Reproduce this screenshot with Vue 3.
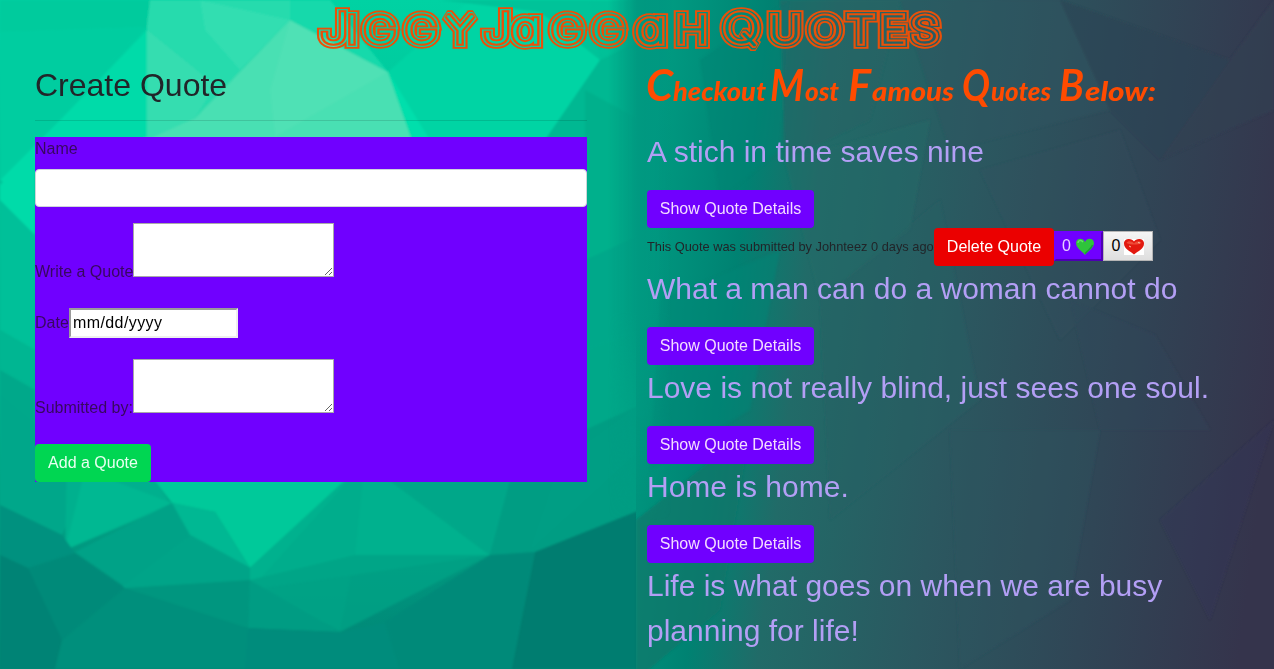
<script setup>
import { ref } from 'vue'

const facets = [
  ['0,0 150,0 147,27 0,32', '#00cb9d'],
  ['0,32 147,27 60,120 0,180', '#00cda0'],
  ['0,180 60,120 147,30 147,137 35,170 35,200', '#00dba9'],
  ['147,25 150,0 290,0 290,20 195,118 147,132', '#26dbad'],
  ['200,0 290,20 240,70 205,30', '#32deb1'],
  ['290,20 388,72 412,140 140,140 195,118', '#4ae0b3'],
  ['147,30 215,85 195,118 147,140', '#36ddb0'],
  ['290,20 388,72 275,137 270,90', '#54e1b6', 0.6],
  ['290,0 330,0 388,72 290,20', '#16d9ab'],
  ['388,72 470,0 590,0 600,60 545,140 412,140', '#00d4a4'],
  ['388,72 430,140 412,140', '#00dfac'],
  ['600,60 640,40 640,200 545,140', '#00b892'],
  ['440,0 640,0 640,40 600,60 540,12', '#00b892', 0.6],
  ['0,185 35,150 35,250 0,330', '#00dba9'],
  ['0,200 35,235 35,350 0,330', '#00c099'],
  ['0,330 35,350 35,390 0,370', '#00b692'],
  ['0,370 35,390 35,482 0,505', '#00a88a'],
  ['585,90 640,120 640,320 585,260', '#00b08c'],
  ['585,260 640,235 640,330 585,350', '#00a88a'],
  ['585,350 640,330 640,405 585,440', '#00a889'],
  ['0,395 90,470 62,535 0,505', '#00a78a'],
  ['67,462 140,462 172,505 65,550', '#00b08e'],
  ['140,462 365,462 250,568 215,512 172,503', '#00c99a'],
  ['172,503 65,550 85,470', '#00bc94', 0.7],
  ['172,503 75,552 125,587 190,535', '#00a287'],
  ['172,503 215,512 250,568 190,535', '#00b893'],
  ['190,535 250,568 250,590 120,588', '#00a488'],
  ['365,462 490,555 250,590 250,568', '#00b18e'],
  ['365,462 515,462 490,555', '#00a789'],
  ['365,462 355,555 340,630 250,590', '#00aa8a', 0.6],
  ['515,462 640,405 640,510 535,552 490,555', '#009d83'],
  ['560,462 640,405 640,450 530,550', '#00a085', 0.5],
  ['0,505 62,535 75,553 28,568 0,555', '#00917f'],
  ['28,568 75,553 125,588 62,640 0,555', '#008a79'],
  ['0,555 28,568 62,640 55,669 0,669', '#008374'],
  ['125,588 250,580 248,628 140,610', '#00967f'],
  ['62,640 125,588 248,628 250,669 55,669', '#008f7b'],
  ['250,580 340,632 248,628', '#009c83'],
  ['490,555 340,632 250,580 355,555', '#00a286', 0.8],
  ['248,628 340,632 385,622 400,669 245,669', '#008c7b'],
  ['385,622 490,555 535,552 512,669 400,669', '#008a79'],
  ['535,552 640,510 640,669 512,669', '#007d70'],
  ['700,60 790,0 780,150 720,200', '#008473', 0.5],
  ['660,300 780,250 750,410 650,470', '#008675', 0.5],
  ['780,0 900,0 870,120 785,160', '#286365', 0.55],
  ['785,160 930,120 910,230 820,300', '#236d69', 0.45],
  ['820,300 940,200 980,400 830,520', '#295e63', 0.4],
  ['636,520 750,430 720,610 636,680', '#127469', 0.65],
  ['900,0 1060,0 1110,110 950,150', '#2e555f', 0.4],
  ['1060,0 1230,60 1160,160 1110,110', '#2e4251', 0.5],
  ['1230,60 1274,0 1274,110 1160,160', '#333f52', 0.6],
  ['980,170 1120,130 1160,240 1060,340', '#30515e', 0.2],
  ['1070,300 1155,335 1210,430 1100,430', '#31465a', 0.25],
  ['1160,520 1274,420 1210,620', '#36335a', 0.35],
  ['950,430 1100,430 1070,600 960,669', '#2b535f', 0.3],
]

const name = ref('')
const quote = ref('')
const author = ref('')

// Centre of every letter on the banner line; glyphs are widened by the same factor.
const stretch = 1.22
const centres = [334, 352, 380, 421.5, 460, 477, 497, 526, 567.5, 608.5, 651, 692, 712, 741.5, 785, 825, 861, 892.5, 925]
const banner = centres.map((c) => (c / stretch).toFixed(2)).join(' ')

const quotes = [
  { text: 'A stich in time saves nine', open: true },
  { text: 'What a man can do a woman cannot do' },
  { text: 'Love is not really blind, just sees one soul.' },
  { text: 'Home is home.' },
  { text: 'Life is what goes on when we are busy planning for life!', last: true },
]
</script>

<template>
  <div class="page">
    <svg class="backdrop" viewBox="0 0 1274 669" aria-hidden="true">
      <defs>
        <linearGradient id="leftBase" x1="0" y1="0" x2="0" y2="1">
          <stop offset="0" stop-color="#00d2a3" />
          <stop offset="0.6" stop-color="#00b08d" />
          <stop offset="1" stop-color="#008575" />
        </linearGradient>
        <linearGradient id="rightBase" gradientUnits="userSpaceOnUse" x1="634" y1="300" x2="1274" y2="380">
          <stop offset="0" stop-color="#009a81" />
          <stop offset="0.15" stop-color="#008272" />
          <stop offset="0.26" stop-color="#216b68" />
          <stop offset="0.5" stop-color="#2b5860" />
          <stop offset="0.75" stop-color="#304656" />
          <stop offset="1" stop-color="#35344c" />
        </linearGradient>
        <linearGradient id="seam" x1="0" y1="0" x2="1" y2="0">
          <stop offset="0" stop-color="#009a81" stop-opacity="0" />
          <stop offset="0.45" stop-color="#009a81" />
          <stop offset="0.6" stop-color="#009880" />
          <stop offset="1" stop-color="#009580" stop-opacity="0" />
        </linearGradient>
        <linearGradient id="seamFade" x1="0" y1="0" x2="0" y2="1">
          <stop offset="0.6" stop-color="#fff" />
          <stop offset="1" stop-color="#000" />
        </linearGradient>
        <mask id="seamMask" maskUnits="userSpaceOnUse" x="600" y="0" width="90" height="520">
          <rect x="600" width="90" height="520" fill="url(#seamFade)" />
        </mask>
        <filter id="soft"><feGaussianBlur stdDeviation="1" /></filter>
      </defs>
      <rect width="640" height="669" fill="url(#leftBase)" />
      <g filter="url(#soft)">
        <polygon v-for="(f, i) in facets.slice(0, 42)" :key="i" :points="f[0]" :fill="f[1]" :opacity="f[2] || 1" />
      </g>
      <rect x="636" width="638" height="669" fill="url(#rightBase)" />
      <g filter="url(#soft)">
        <polygon v-for="(f, i) in facets.slice(42)" :key="i" :points="f[0]" :fill="f[1]" :opacity="f[2] || 1" />
      </g>
      <rect x="608" width="64" height="520" fill="url(#seam)" mask="url(#seamMask)" />
    </svg>

    <header class="banner">
      <svg width="1274" height="60" viewBox="0 0 1274 60">
        <defs>
          <mask id="contours" maskUnits="userSpaceOnUse" x="0" y="0" width="1274" height="60">
            <use href="#brand" fill="#fff" stroke="#fff" stroke-width="11.4" />
            <use href="#brand" fill="#000" stroke="#000" stroke-width="8" />
            <use href="#brand" fill="#fff" stroke="#fff" stroke-width="5.4" />
            <use href="#brand" fill="#000" stroke="#000" stroke-width="1.6" />
          </mask>
        </defs>
        <g :transform="`scale(${stretch} 1)`">
          <g mask="url(#contours)" fill="#ea5008" stroke="#ea5008" stroke-width="14">
            <text id="brand" class="brand" y="43" :x="banner"><tspan class="big">J</tspan>IGGY <tspan class="big">J</tspan><tspan class="round">a</tspan>GG<tspan class="round">a</tspan>H <tspan class="big">Q</tspan>UOTES</text>
          </g>
        </g>
      </svg>
    </header>

    <main class="columns">
      <section class="create">
        <h2>Create Quote</h2>
        <hr />
        <form @submit.prevent>
          <div class="field">
            <label for="name">Name</label>
            <input id="name" v-model="name" class="control" type="text" />
          </div>
          <div class="line area">
            <label for="quote">Write a Quote</label>
            <textarea id="quote" v-model="quote"></textarea>
          </div>
          <div class="line date">
            <label>Date</label>
            <div class="dateinput">mm/dd/yyyy</div>
          </div>
          <div class="line area second">
            <label for="author">Submitted by:</label>
            <textarea id="author" v-model="author"></textarea>
          </div>
          <button class="btn add" type="submit">Add a Quote</button>
        </form>
      </section>

      <section class="list">
        <svg class="script" width="560" height="69" viewBox="647 60 560 69">
          <text y="101">
            <tspan class="cap" x="646" textLength="27" lengthAdjust="spacingAndGlyphs">C</tspan><tspan x="673" textLength="93" lengthAdjust="spacingAndGlyphs">heckout</tspan>
            <tspan class="cap" x="770" textLength="34" lengthAdjust="spacingAndGlyphs">M</tspan><tspan x="805" textLength="34" lengthAdjust="spacingAndGlyphs">ost</tspan>
            <tspan class="cap" x="848" textLength="23" lengthAdjust="spacingAndGlyphs">F</tspan><tspan x="872" textLength="82" lengthAdjust="spacingAndGlyphs">amous</tspan>
            <tspan class="cap" x="962" textLength="28" lengthAdjust="spacingAndGlyphs">Q</tspan><tspan x="991" textLength="60" lengthAdjust="spacingAndGlyphs">uotes</tspan>
            <tspan class="cap" x="1059" textLength="25" lengthAdjust="spacingAndGlyphs">B</tspan><tspan x="1085" textLength="71" lengthAdjust="spacingAndGlyphs">elow:</tspan>
          </text>
        </svg>
        <article v-for="q in quotes" :key="q.text">
          <p class="quote">{{ q.text }}</p>
          <button v-if="!q.last" class="btn show">Show Quote Details</button>
          <div v-if="q.open" class="details">
            <span class="meta">This Quote was submitted by Johnteez 0 days ago</span>
            <button class="btn delete">Delete Quote</button>
            <button class="vote up">
              <span>0</span>
              <svg width="20" height="18" viewBox="0 0 20 18">
                <path d="M10 18C7 14 1 11 1 6C1 1 8 0 10 5C12 0 19 1 19 6C19 11 13 14 10 18Z" fill="#2fc43b" />
                <path d="M3 6C3 3.500 6 2.500 8 5" fill="none" stroke="#67df69" stroke-width="1.500" />
                <path d="M17.500 8C16 12 13 13 10 16.500" fill="none" stroke="#189b35" stroke-width="1.300" />
              </svg>
            </button>
            <button class="vote down">
              <span>0</span>
              <svg width="20" height="18" viewBox="0 0 20 18">
                <rect y="2" width="20" height="16" fill="#fff" />
                <path d="M10 17.500C6 14 0 12 0 6.500C0 1 8 1 10 4.500C12 1 20 1 20 6.500C20 12 14 14 10 17.500Z" fill="#e2190f" />
                <path d="M2.500 6C4 3.500 8 4 10 6.500C12 4 16 3.500 17.500 6C14 8 7 8 2.500 6Z" fill="#ee4c38" />
                <path d="M5 9L7 10M14 5.500L16 6" stroke="#ffc2a5" stroke-width="1" />
              </svg>
            </button>
          </div>
        </article>
      </section>
    </main>
  </div>
</template>

<style>
body {
  margin: 0;
  overflow: hidden;
}
</style>

<style scoped>
* {
  box-sizing: border-box;
}
.page {
  position: relative;
  width: 1274px;
  height: 669px;
  overflow: hidden;
  font: 16px/24px "Liberation Sans", Arial, sans-serif;
  color: #212529;
}
.backdrop {
  position: absolute;
  inset: 0;
  width: 1274px;
  height: 669px;
}
.banner,
.columns {
  position: relative;
}
.banner {
  height: 60px;
}
.banner svg,
.script {
  display: block;
}
.brand {
  font-family: Inter, Lato, sans-serif;
  font-weight: 100;
  font-size: 36px;
  text-anchor: middle;
  stroke-linejoin: miter;
  stroke-miterlimit: 2;
}
.brand .big {
  font-size: 41px;
}
.brand .round {
  font-size: 43px;
  font-feature-settings: "cv11";
}
.columns {
  display: grid;
  grid-template-columns: 552px 592px;
  column-gap: 60px;
  padding-left: 35px;
}
h2 {
  margin: 6px 0 0;
  font-weight: 400;
  font-size: 32px;
  line-height: 38px;
}
hr {
  height: 1px;
  margin: 16px 0;
  border: 0;
  background: rgba(0, 0, 0, 0.12);
}
form {
  height: 345px;
  background: #7000ff;
}
label {
  color: #38085f;
}
.field label {
  display: block;
  height: 32px;
}
.control {
  display: block;
  width: 552px;
  height: 38px;
  border: 1px solid #ced4da;
  border-radius: 4px;
  background: #fff;
}
.line {
  display: flex;
}
.area {
  height: 61px;
  margin-top: 16px;
}
.area label {
  width: 98px;
  white-space: nowrap;
  align-self: flex-end;
}
textarea {
  display: block;
  width: 201px;
  height: 54px;
  margin: 0;
  padding: 2px;
  border: 1px solid #a9a9a9;
  border-radius: 0;
  background: #fff;
}
.date {
  height: 30px;
  margin-top: 24px;
  align-items: center;
}
.date label {
  width: 34px;
}
.dateinput {
  width: 169px;
  height: 30px;
  padding: 1px 2px;
  border: 2px solid;
  border-color: #9a9a9a #eee #eee #9a9a9a;
  background: #fff;
  color: #000;
  line-height: 24px;
  letter-spacing: 0.4px;
}
.second {
  margin-top: 21px;
}
.btn {
  display: block;
  height: 38px;
  padding: 0;
  border: 0;
  border-radius: 4px;
  color: #fff;
  font: 16px/24px "Liberation Sans", Arial, sans-serif;
}
.add {
  width: 116px;
  margin-top: 24px;
  background: #00d652;
  color: #e8fff0;
}
.script text {
  font: italic 900 27px Lato, sans-serif;
  fill: #ff4b00;
}
.script .cap {
  font-size: 43px;
  font-weight: 700;
}
.quote {
  margin: 0 0 16px;
  font-size: 30px;
  line-height: 45px;
  color: #b39ff5;
}
.show {
  width: 167px;
  background: #7000ff;
  color: #f4dcff;
}
.details {
  display: flex;
  align-items: center;
  height: 38px;
}
.meta {
  width: 287px;
  font-size: 12.8px;
  white-space: nowrap;
}
.delete {
  width: 120px;
  background: #eb0000;
}
.vote {
  display: flex;
  align-items: center;
  justify-content: center;
  gap: 4px;
  width: 49px;
  height: 30px;
  margin: 0 0 2px;
  padding: 0;
  border: 2px solid;
  font: 16px/24px "Liberation Sans", Arial, sans-serif;
}
.up {
  background: #7000ff;
  border-color: #7000ff #4d00b4 #4d00b4 #7000ff;
  color: #e6d0ff;
}
.down {
  width: 50px;
  background: linear-gradient(#f5f5f5, #dedede);
  border: 1px solid #b5b5b5;
  color: #000;
}
</style>
